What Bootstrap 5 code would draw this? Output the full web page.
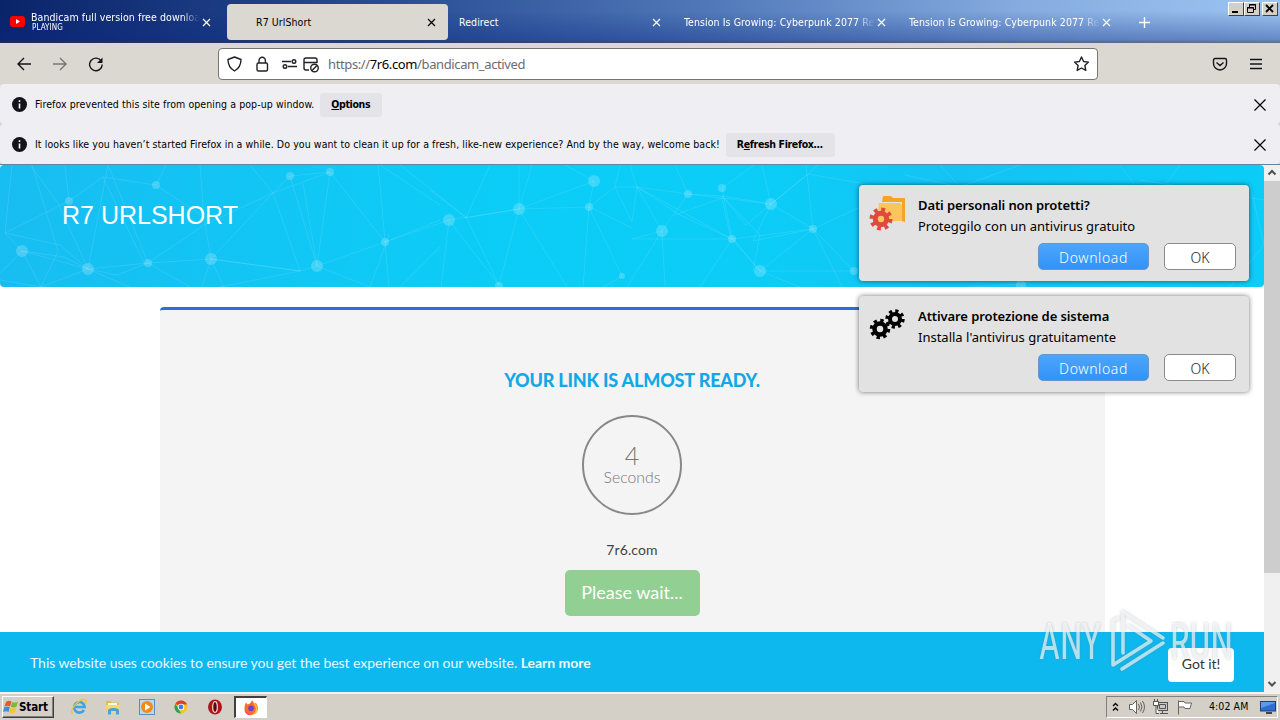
<!DOCTYPE html>
<html lang="en">
    <head>
        <meta charset="UTF-8" />
        <meta name="viewport" content="width=device-width, initial-scale=1.0" />
        <title>R7 UrlShort</title>
        <link
            href="https://cdn.jsdelivr.net/npm/bootstrap@5.3.0/dist/css/bootstrap.min.css"
            rel="stylesheet"
        />
        <style>
            body {
                height: 720px;
                font-family: "DejaVu Sans Condensed", "DejaVu Sans", sans-serif;
                font-stretch: condensed;
                font-size: 10.5px;
                line-height: 1.3;
                color: #000;
                letter-spacing: 0.08px;
            }
            svg {
                display: block;
                flex: none;
            }
            .line-icon {
                fill: none;
                stroke: currentColor;
                stroke-width: 1.4;
            }
            .close-icon {
                stroke-width: 1.2;
            }
            .url-icon {
                color: #222;
            }

            /* tabs */
            .tab-strip {
                height: 43px;
                flex: none;
                color: #fff;
                background:
                    linear-gradient(180deg, rgba(10, 36, 106, 0) 25%, rgba(10, 40, 130, 0.38) 92%, rgba(50, 50, 70, 0.6) 100%),
                    linear-gradient(90deg, #0a246a 0%, #284c93 30%, #5078b8 55%, #86ace0 80%, #9cc4f0 100%);
            }
            .browser-tab {
                width: 225px;
                padding: 4px 2px 3px 2px;
                flex: none;
            }
            .tab-inner {
                height: 36px;
                border-radius: 4px;
                padding: 0 12px 0 7px;
            }
            .tab-inner.current {
                background: #dbd8d1;
                color: #000;
                padding-left: 29px;
            }
            .tab-label {
                width: 191px;
                padding-top: 2px;
                white-space: nowrap;
                overflow: hidden;
            }
            .tab-label.faded {
                -webkit-mask-image: linear-gradient(90deg, #000 90%, transparent 100%);
                mask-image: linear-gradient(90deg, #000 90%, transparent 100%);
            }
            .current .tab-label {
                width: 168px;
            }
            .video-label {
                width: 168px;
                line-height: 12px;
                margin: -3px 0 0 5px;
            }
            .playing {
                font-size: 8px;
                line-height: 9px;
                padding-left: 1px;
            }
            .window-btns {
                padding: 2px 2px 0 0;
            }
            .win-btn {
                width: 16px;
                height: 14px;
                background: #d4d0c8;
                border: 1px solid #fff;
                border-right-color: #404040;
                border-bottom-color: #404040;
            }
            .win-btn:last-child {
                margin-left: 2px;
            }

            /* toolbar */
            .toolbar {
                height: 41px;
                flex: none;
                background: #dbd8d1;
                padding: 0 16px;
                color: #15141a;
            }
            .nav-icons {
                gap: 20px;
            }
            .url-bar {
                width: 880px;
                height: 32px;
                margin-left: 114px;
                border: 1px solid #77756f;
                border-radius: 4px;
                background: #fff;
                font-family: "Noto Sans", sans-serif;
                font-size: 13px;
                letter-spacing: -0.38px;
                color: #6b6b70;
                padding: 2px 7px 0;
            }
            .url-icons {
                gap: 11px;
                padding-bottom: 2px;
            }
            .menu-icon {
                margin: 0 1px 0 21px;
            }
            .notices {
                background: #dbd8d1;
            }
            .notice {
                height: 40px;
                flex: none;
                background: #efeff3;
                padding: 1px 13px 0 12px;
                border-radius: 4px;
            }
            .notice-btn {
                height: 24px;
                margin-left: 6px;
                background: #e4e3e8;
                border-radius: 3px;
                font-weight: 700;
                letter-spacing: -0.35px;
                padding: 0 12px 0 11px;
            }

            /* page */
            .viewport-row {
                height: 528px;
                border-top: 1px solid #67849c;
                flex: none;
            }
            .page {
                width: 1264px;
                font-family: Lato, sans-serif;
                letter-spacing: 0;
                background: #fff;
            }
            .hero {
                height: 122px;
                flex: none;
                border-radius: 4px;
                background: linear-gradient(95deg, #18bdf2 0%, #12c5f5 20%, #0bcdf7 40%, #0bcdf8 60%, #14c3f4 75%, #0bcdf7 100%);
            }
            .hero-title {
                font: 25px "Liberation Sans", sans-serif;
                color: #fff;
                padding: 36px 0 0 62px;
                position: relative;
            }
            .link-panel {
                width: 945px;
                margin: 20px 0 0 160px;
                flex: 1;
                border-top: 3px solid #2c6ed5;
                border-radius: 4px 4px 0 0;
                background: #f4f4f4;
                padding-right: 1px;
            }
            .ready {
                font-size: 18px;
                font-weight: 900;
                color: #12a8e6;
                line-height: 22px;
                margin-top: 59px;
                letter-spacing: -0.17px;
            }
            .timer {
                width: 100px;
                height: 100px;
                border: 2px solid #888;
                border-radius: 50%;
                margin-top: 24px;
                padding-bottom: 2px;
                color: #777;
                font-weight: 300;
                font-size: 15.8px;
                line-height: 18px;
            }
            .count {
                font-size: 25px;
                line-height: 25px;
            }
            .domain {
                font-size: 14px;
                line-height: 20px;
                color: #444;
                margin-top: 25px;
                letter-spacing: 0.1px;
            }
            .wait-btn {
                width: 135px;
                height: 46px;
                margin-top: 10px;
                border-radius: 5px;
                background: #92cf92;
                color: #fff;
                font-size: 18px;
            }
            .cookie-bar {
                height: 60px;
                flex: none;
                background: #0db8ee;
                color: #e9f9ff;
                font-size: 14px;
                letter-spacing: -0.04px;
                padding: 2px 30px 0;
            }
            .got-it {
                width: 66px;
                height: 34px;
                margin-top: 3px;
                background: #fff;
                color: #333;
                border-radius: 4px;
            }
            .scroll-col {
                width: 16px;
                background: #f0f0f0;
                color: #505050;
            }
            .scroll-col .line-icon {
                stroke-width: 2;
            }
            .scroll-thumb {
                height: 392px;
                background: #cdcdcd;
            }

            /* push alerts over the page */
            .alerts {
                position: absolute;
                left: 859px;
                top: 185px;
                width: 390px;
            }
            .push {
                height: 96px;
                background: #e2e2e2;
                border-radius: 4px;
                box-shadow: 0 0 5px rgba(0, 0, 0, 0.55);
                font-family: "Noto Sans", sans-serif;
                font-size: 13px;
                letter-spacing: 0;
                line-height: 21px;
                padding: 10px 13px 0 10px;
                margin-bottom: 15px;
            }
            .push-icon {
                margin-right: 11px;
            }
            .push-title {
                font-weight: 600;
                letter-spacing: -0.1px;
            }
            .push-actions {
                gap: 15px;
                margin-top: 6px;
            }
            .push-btn {
                height: 27px;
                border: 1px solid #8b8b8b;
                border-radius: 5px;
                font-size: 14px;
                font-weight: 300;
                background: #fff;
                color: #222;
                width: 72px;
                padding-top: 2px;
            }
            .push-btn.main-action {
                width: 111px;
                background: linear-gradient(#4da6fb, #3192f8);
                border-color: #6796c8;
                color: #fff;
                letter-spacing: 0.6px;
            }
            .watermark {
                position: absolute;
                left: 1032px;
                top: 604px;
                filter: drop-shadow(0 0 1.5px rgba(110, 120, 130, 0.6));
            }

            /* taskbar */
            .taskbar {
                height: 28px;
                flex: none;
                background: #d4d0c8;
                box-shadow: inset 0 2px #f4f2ee;
                padding: 4px 2px 2px;
            }
            .start-btn {
                width: 52px;
                height: 22px;
                border: 1px solid #fff;
                border-right-color: #404040;
                border-bottom-color: #404040;
                box-shadow: inset -1px -1px #808080;
                font-weight: 700;
                font-size: 11.5px;
                letter-spacing: -0.1px;
            }
            .quick-bar {
                margin: 0 2px 0 8px;
            }
            .quick {
                width: 34px;
            }
            .fox-btn {
                width: 33px;
                height: 22px;
                background: #fff;
                border: 1px solid #404040;
                border-width: 2px 1px 1px 2px;
                border-right-color: #fff;
                border-bottom-color: #fff;
            }
            .tray {
                width: 172px;
                height: 22px;
                border: 1px solid #808080;
                border-right-color: #fff;
                border-bottom-color: #fff;
                padding-left: 5px;
            }
            .tray-icons {
                gap: 6px;
                margin-left: 9px;
            }
            .clock {
                margin-left: 15px;
            }
        </style>
    </head>
    <body class="d-flex flex-column overflow-hidden">
        <div class="tab-strip d-flex">
            <div class="browser-tab">
                <div class="tab-inner d-flex align-items-center">
                    <svg width="17" height="12" viewBox="0 0 17 12">
                        <rect x="1" width="15" height="11" rx="3" fill="#f00" />
                        <path d="M7 3l4 2.5L7 8z" fill="#fff" />
                    </svg>
                    <div class="tab-label faded video-label">
                        <div>Bandicam full version free download</div>
                        <div class="playing">PLAYING</div>
                    </div>
                    <svg class="line-icon close-icon ms-auto" width="9" height="9"><path d="M1 1l7 7M8 1l-7 7" /></svg>
                </div>
            </div>
            <div class="browser-tab">
                <div class="tab-inner current d-flex align-items-center justify-content-between">
                    <div class="tab-label">R7 UrlShort</div>
                    <svg class="line-icon close-icon" width="9" height="9"><path d="M1 1l7 7M8 1l-7 7" /></svg>
                </div>
            </div>
            <div class="browser-tab">
                <div class="tab-inner d-flex align-items-center justify-content-between">
                    <div class="tab-label">Redirect</div>
                    <svg class="line-icon close-icon" width="9" height="9"><path d="M1 1l7 7M8 1l-7 7" /></svg>
                </div>
            </div>
            <div class="browser-tab">
                <div class="tab-inner d-flex align-items-center justify-content-between">
                    <div class="tab-label faded">Tension Is Growing: Cyberpunk 2077 Re</div>
                    <svg class="line-icon close-icon" width="9" height="9"><path d="M1 1l7 7M8 1l-7 7" /></svg>
                </div>
            </div>
            <div class="browser-tab">
                <div class="tab-inner d-flex align-items-center justify-content-between">
                    <div class="tab-label faded">Tension Is Growing: Cyberpunk 2077 Re</div>
                    <svg class="line-icon close-icon" width="9" height="9"><path d="M1 1l7 7M8 1l-7 7" /></svg>
                </div>
            </div>
            <svg class="line-icon mt-3" width="26" height="13"><path d="M19.500 1v11M14 6.500h11" /></svg>
            <div class="window-btns d-flex ms-auto">
                <div class="win-btn"><svg width="14" height="12"><path d="M3 9h6" stroke="#000" stroke-width="2" /></svg></div>
                <div class="win-btn">
                    <svg width="14" height="12" fill="none" stroke="#000"><path d="M4.500 5V1.500h6v5H9M4 2h7M2.500 4.500h6v5h-6zM2 5h7" /></svg>
                </div>
                <div class="win-btn"><svg width="14" height="12" stroke="#000" stroke-width="1.800"><path d="M3 2l7 7M10 2l-7 7" /></svg></div>
            </div>
        </div>

        <div class="toolbar d-flex align-items-center">
            <div class="nav-icons d-flex">
                <svg class="line-icon" width="16" height="16"><path d="M15 8H2M8 2L2 8l6 6" /></svg>
                <svg class="line-icon opacity-50" width="16" height="16"><path d="M1 8h13M8 2l6 6-6 6" /></svg>
                <svg class="line-icon" width="16" height="16">
                    <path d="M13.300 5.200A6.300 6.300 0 1 0 14.200 8.500" /><path d="M14.500 1.500v5.500H9z" fill="currentColor" stroke="none" />
                </svg>
            </div>
            <div class="url-bar d-flex align-items-center">
                <div class="url-icons url-icon d-flex align-items-center">
                    <svg class="line-icon" width="17" height="16"><path d="M8.500 1l6.500 2.500c0 5.500-2 9-6.500 11.500C4 12.500 2 9 2 3.500z" stroke-linejoin="round" /></svg>
                    <svg class="line-icon" width="16" height="16"><rect x="3" y="7" width="10.500" height="8" rx="1.500" /><path d="M5 7V4.500a3.200 3.200 0 0 1 6.400 0V7" /></svg>
                    <svg class="line-icon" width="17" height="14"><path d="M1 4.500h9M7 9.500h9" /><circle cx="13" cy="4.500" r="1.800" /><circle cx="4" cy="9.500" r="1.800" /></svg>
                </div>
                <svg class="line-icon url-icon ms-1" width="18" height="17"><path d="M7 14H4a2 2 0 0 1-2-2V4a2 2 0 0 1 2-2h9a2 2 0 0 1 2 2v3M2 6.500h13" /><circle cx="12.500" cy="12" r="3.800" /><path d="M10 14.500l5-5" /></svg>
                <span class="ms-2">https://<span class="text-black">7r6.com</span>/bandicam_actived</span>
                <svg class="line-icon url-icon ms-auto" width="17" height="17"><path d="M8.500 1l2.100 4.500 4.900.6-3.600 3.400.9 4.900-4.300-2.400-4.300 2.400.9-4.900L1.500 6.100l4.900-.6z" stroke-linejoin="round" /></svg>
            </div>
            <svg class="line-icon ms-auto" width="16" height="16"><path d="M3 2.500h10a1.500 1.500 0 0 1 1.500 1.500v3.500a6.500 6.500 0 0 1-13 0V4A1.500 1.500 0 0 1 3 2.500zM4.500 6.500l3.500 3 3.500-3" /></svg>
            <svg class="line-icon menu-icon" width="14" height="14"><path d="M1 2.500h12M1 7h12M1 11.500h12" /></svg>
        </div>

        <div class="notices">
            <div class="notice d-flex align-items-center">
                <svg width="15" height="15"><circle cx="7.500" cy="7.500" r="7.500" fill="#15141a" /><path d="M7.500 3.200v1.800M7.500 6.500v5" stroke="#fff" stroke-width="1.600" /></svg>
                <span class="ms-2">Firefox prevented this site from opening a pop-up window.</span>
                <div class="notice-btn d-flex align-items-center"><u>O</u>ptions</div>
                <svg class="line-icon close-icon ms-auto" width="14" height="14"><path d="M1.500 1.500l11 11M12.500 1.500l-11 11" /></svg>
            </div>
            <div class="notice d-flex align-items-center">
                <svg width="15" height="15"><circle cx="7.500" cy="7.500" r="7.500" fill="#15141a" /><path d="M7.500 3.200v1.800M7.500 6.500v5" stroke="#fff" stroke-width="1.600" /></svg>
                <span class="ms-2">It looks like you haven’t started Firefox in a while. Do you want to clean it up for a fresh, like-new experience? And by the way, welcome back!</span>
                <div class="notice-btn d-flex align-items-center">R<u>e</u>fresh Firefox…</div>
                <svg class="line-icon close-icon ms-auto" width="14" height="14"><path d="M1.500 1.500l11 11M12.500 1.500l-11 11" /></svg>
            </div>
        </div>

        <div class="viewport-row d-flex">
            <main class="page d-flex flex-column">
                <div class="hero position-relative overflow-hidden">
                    <!-- network pattern -->
                    <svg class="position-absolute top-0 start-0" width="1264" height="122">
                        <path
                            fill="none"
                            stroke="#fff"
                            stroke-opacity=".11"
                            d="M12 0L5 68L22 86L88 104L148 98L211 94L300 106L317 101L385 77L449 55L519 44L594 16M5 68L69 36L103 12L156 20L204 52L211 94L273 28L290 11L330 7L385 77L389 122M32 0L58 86L41 122L88 104L108 0L148 98L204 60L273 28L330 7M5 68L60 80L88 104L117 110L148 98L190 122M22 86L64 92L88 104L130 122M0 108L22 86L41 122L0 115M200 0L204 52M156 20L166 0M65 0L69 36M30 0L58 38L88 104M103 12L144 98M211 94L202 122M211 94L224 122M250 0L273 28L300 106M290 11L317 101L303 18M330 7L317 101L370 122M211 94L300 106L220 122M378 0L381 30L385 77L440 55M400 0L466 52L499 120L449 55L441 122M430 25L466 53L490 0M519 44V0M519 44L532 0M519 44L499 120M519 44L567 122M519 44L589 42L594 16L565 0M466 53L519 44M589 42L583 122M589 42L622 111L603 122M589 42L632 63M589 42L615 22L637 22L688 29L771 39M615 22L632 57L637 22L630 0M615 22L620 0M637 22L662 66L627 122M637 22L732 74L632 74L662 66L665 122M662 66L688 29L675 0M675 50L722 33L730 70L760 106L854 106M637 22L680 50L732 74L813 64L771 39L808 9L818 0M722 23L754 0M722 23L732 74L700 122M688 29L722 31L771 39L762 0M722 31L760 70L753 106M722 31L746 60L771 39L753 76L813 64L854 106M732 74L760 106L813 64L806 0M771 39L808 9L900 25M813 64L860 42M813 64L842 122M760 106L800 122M940 0L960 22L905 10M960 22L1020 0M1022 119L1080 100M1022 119L970 122M1140 15L1264 35M1120 0L1150 40L1180 0M1250 20L1264 80L1230 122M380 0L440 40M370 122L389 70M400 122L440 82"
                        />
                        <g fill="#fff" fill-opacity=".2">
                            <circle cx="69" cy="36" r="4" />
                            <circle cx="22" cy="86" r="6" />
                            <circle cx="88" cy="104" r="6" />
                            <circle cx="148" cy="98" r="4" />
                            <circle cx="156" cy="20" r="4" />
                            <circle cx="211" cy="94" r="6" />
                            <circle cx="290" cy="11" r="4" />
                            <circle cx="330" cy="7" r="4" />
                            <circle cx="317" cy="101" r="6" />
                            <circle cx="385" cy="77" r="4" />
                            <circle cx="449" cy="55" r="6" />
                            <circle cx="519" cy="44" r="6" />
                            <circle cx="594" cy="16" r="6" />
                            <circle cx="589" cy="42" r="4" />
                            <circle cx="499" cy="121" r="4" />
                            <circle cx="622" cy="111" r="3" />
                            <circle cx="662" cy="66" r="6" />
                            <circle cx="688" cy="29" r="4" />
                            <circle cx="722" cy="23" r="4" />
                            <circle cx="732" cy="74" r="4" />
                            <circle cx="771" cy="39" r="6" />
                            <circle cx="760" cy="106" r="6" />
                            <circle cx="813" cy="64" r="4" />
                            <circle cx="854" cy="106" r="4" />
                            <circle cx="1021" cy="120" r="5" />
                        </g>
                    </svg>
                    <div class="hero-title">R7 URLSHORT</div>
                </div>
                <div class="link-panel d-flex flex-column align-items-center overflow-hidden">
                    <div class="ready">YOUR LINK IS ALMOST READY.</div>
                    <div class="timer d-flex flex-column align-items-center justify-content-center flex-shrink-0">
                        <div class="count">4</div>
                        <div>Seconds</div>
                    </div>
                    <div class="domain">7r6.com</div>
                    <div class="wait-btn d-flex align-items-center justify-content-center flex-shrink-0">Please wait...</div>
                </div>
                <div class="cookie-bar d-flex align-items-center">
                    <span>This website uses cookies to ensure you get the best experience on our website. <b>Learn more</b></span>
                    <div class="got-it d-flex align-items-center justify-content-center ms-auto">Got it!</div>
                </div>
            </main>
            <div class="scroll-col d-flex flex-column">
                <svg class="line-icon" width="16" height="16"><path d="M4.500 9.500L8 6l3.500 3.500" /></svg>
                <div class="scroll-thumb"></div>
                <svg class="line-icon mt-auto" width="16" height="16"><path d="M4.500 6L8 9.500 11.500 6" /></svg>
            </div>
        </div>

        <div class="taskbar d-flex align-items-center">
            <div class="start-btn d-flex align-items-center">
                <svg width="16" height="16" viewBox="0 0 16 16">
                    <path d="M3 3q3-2 5.500-.5L7 7.500Q4.500 6 1.500 7.500z" fill="#e8582a" />
                    <path d="M9.200 3Q12 4.300 15 2.500L13.500 7.500q-3 1.700-5.800.3z" fill="#7fba32" />
                    <path d="M1.300 8.300q3-1.500 5.500 0L5.500 13Q3 11.500 0 13z" fill="#3c8ede" />
                    <path d="M7.500 8.800q3 1.300 5.800-.3L12 13.200q-3 1.600-5.800.3z" fill="#f9c32c" />
                </svg>
                Start
            </div>
            <div class="quick-bar d-flex align-items-center">
                <div class="quick d-flex justify-content-center">
                    <svg width="18" height="18" fill="none">
                        <path d="M14 12a5.300 5.300 0 1 1 .7-3H5" stroke="#3fa4e6" stroke-width="2.600" />
                        <path d="M2.500 15.500C-1 12 10-1 15.500 2q1.500 1 0 3.500" stroke="#edc53b" stroke-width="1.400" />
                    </svg>
                </div>
                <div class="quick d-flex justify-content-center">
                    <svg width="18" height="18">
                        <path d="M2 3h5l1 1.500h7V14H2z" fill="#e3bd4c" /><path d="M4 5h9v4H4z" fill="#fff8dc" /><path d="M2 7h14l-.5 8H2.500z" fill="#f2d777" /><path d="M4 16.500v-4q0-2.500 5.500-2.500t5.500 2.500v4h-3V13H7v3.500z" fill="#4aa0d8" />
                    </svg>
                </div>
                <div class="quick d-flex justify-content-center">
                    <svg width="18" height="18">
                        <rect x="1.500" y="1.500" width="15" height="15" fill="#b9d9f2" stroke="#5591c7" /><circle cx="9" cy="9" r="6" fill="#f18a1c" /><path d="M7 5.500l5.500 3.500L7 12.500z" fill="#fff" />
                    </svg>
                </div>
                <div class="quick d-flex justify-content-center">
                    <svg width="16" height="16">
                        <circle cx="8" cy="8" r="6.500" fill="#fbc51c" /><path d="M8 8L2.400 4.700A6.500 6.500 0 0 1 14 5.500H8z" fill="#e13b2d" /><path d="M2.400 4.700L6 10.500l2 4A6.500 6.500 0 0 1 2.400 4.700z" fill="#2ba24c" />
                        <circle cx="8" cy="8" r="3.200" fill="#fff" /><circle cx="8" cy="8" r="2.400" fill="#3f7de0" />
                    </svg>
                </div>
                <div class="quick d-flex justify-content-center">
                    <svg width="18" height="18"><ellipse cx="9" cy="9" rx="7" ry="7.500" fill="#b0151a" /><ellipse cx="9" cy="9" rx="2.300" ry="5.300" fill="#5a0508" stroke="#f0dede" stroke-width="1.200" /></svg>
                </div>
            </div>
            <div class="fox-btn d-flex align-items-center justify-content-center">
                <svg width="16" height="16">
                    <path d="M1.500 8Q1.500 4.500 3 2.500l1.500 2L7 3.500Q8 1.500 9.500.500q.5 2 2.500 3l1-.5q2 3 2 5.500a6.700 6.700 0 0 1-13.500-.5z" fill="#ff6a2b" />
                    <path d="M9.500.500q.5 2 2.500 3 3 3 2.500 7-2 4-5 4 4-3 3-7z" fill="#ffc42e" /><path d="M1.500 8.500q1 5 6.500 6.500-4 .8-6-3z" fill="#e92f57" /><circle cx="8" cy="8.300" r="2.800" fill="#6b3fd1" />
                </svg>
            </div>
            <div class="tray d-flex align-items-center ms-auto">
                <svg class="line-icon" width="7" height="12"><path d="M1 5l2.500-2.500L6 5M1 9.500L3.500 7 6 9.500" /></svg>
                <div class="tray-icons d-flex">
                    <svg width="18" height="16" fill="none" stroke="#66645f"><path d="M1.500 5.500h3l4-4v13l-4-4h-3z" fill="#fff" /><path d="M10.500 5q2 3 0 6M12.500 3.500q3 4.500 0 9M14.500 2q4 6 0 12" /></svg>
                    <svg width="18" height="16" fill="none" stroke="#55534f"><rect x="5.500" y="3.500" width="10" height="8" fill="#c8c8c8" /><path d="M7.500 5.500h6v4h-6zM8 14.500h8M10.500 12v2" /><path d="M1.500 2.500h5v4h-5zM4 6.500v8h3M2.500 0v2M5.500 0v2" fill="#fff" /></svg>
                    <svg width="18" height="16" fill="none" stroke="#66645f"><path d="M2.500 15.500v-14M3 2.500h5l1 1.500h6.500L14 9.500H9L8 8H3" fill="#fff" /></svg>
                </div>
                <span class="clock">4:02 AM</span>
                <svg class="ms-auto" width="17" height="14"><rect x=".5" y="1.500" width="15" height="9.500" fill="#2d6fce" stroke="#204070" /><path d="M1 8l14-5v-1H1z" fill="#5b9bea" /><path d="M6 13h6" stroke="#444" stroke-width="2" /></svg>
            </div>
        </div>

        <div class="alerts">
            <div class="push">
                <div class="d-flex">
                    <svg class="push-icon" width="38" height="38">
                        <path d="M14 1h8l2 2h12v24l-3-1V7H13z" fill="#f7a422" /><path d="M10 8h21l2 2v16H8z" fill="#fbc55c" />
                        <circle cx="12" cy="24" r="9.500" fill="none" stroke="#e0493e" stroke-width="4" stroke-dasharray="3.730 3.730" /><circle cx="12" cy="24" r="5.700" fill="#fbc55c" stroke="#e0493e" stroke-width="5" />
                    </svg>
                    <div>
                        <div class="push-title">Dati personali non protetti?</div>
                        <div>Proteggilo con un antivirus gratuito</div>
                    </div>
                </div>
                <div class="push-actions d-flex justify-content-end">
                    <div class="push-btn main-action d-flex align-items-center justify-content-center">Download</div>
                    <div class="push-btn d-flex align-items-center justify-content-center">OK</div>
                </div>
            </div>
            <div class="push">
                <div class="d-flex">
                    <svg class="push-icon" width="38" height="38" fill="none" stroke="#000">
                        <circle cx="11" cy="23" r="8.500" stroke-width="3.500" stroke-dasharray="3.338 3.338" /><circle cx="11" cy="23" r="5.500" stroke-width="4.500" />
                        <circle cx="26" cy="13" r="8" stroke-width="3.400" stroke-dasharray="3.142 3.142" /><circle cx="26" cy="13" r="5" stroke-width="4" />
                    </svg>
                    <div>
                        <div class="push-title">Attivare protezione de sistema</div>
                        <div>Installa l'antivirus gratuitamente</div>
                    </div>
                </div>
                <div class="push-actions d-flex justify-content-end">
                    <div class="push-btn main-action d-flex align-items-center justify-content-center">Download</div>
                    <div class="push-btn d-flex align-items-center justify-content-center">OK</div>
                </div>
            </div>
        </div>

        <svg class="watermark" width="240" height="78">
            <g fill="#fff" fill-opacity=".65" font-family="Roboto, sans-serif" font-weight="400" font-size="50" letter-spacing="0">
                <text x="7" y="55" textLength="62" lengthAdjust="spacingAndGlyphs">ANY</text>
                <text x="138" y="55" textLength="63" lengthAdjust="spacingAndGlyphs">RUN</text>
            </g>
            <g fill="none" stroke="#fff" stroke-opacity=".65" stroke-width="3.500" stroke-linejoin="round" stroke-linecap="round">
                <path d="M91 49V8L131 34M86 14l-5 3v44l38-24-22-15" />
                <path d="M131 39L90 65" />
            </g>
        </svg>

        <script src="https://cdn.jsdelivr.net/npm/bootstrap@5.3.0/dist/js/bootstrap.bundle.min.js"></script>
    </body>
</html>
